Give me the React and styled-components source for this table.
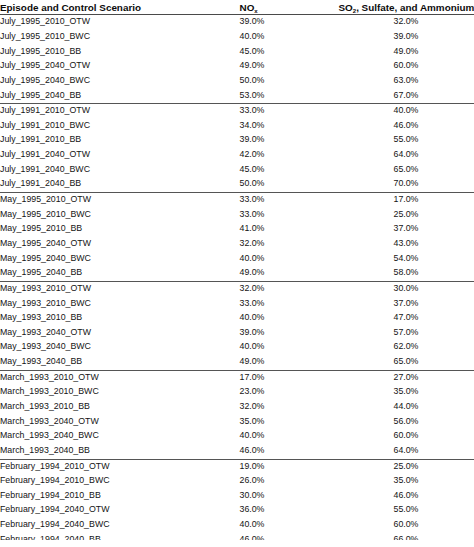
import React from 'react';
import styled, { createGlobalStyle } from 'styled-components';

const GlobalStyle = createGlobalStyle`
    html, body {
        margin: 0;
        padding: 0;
        background: #ffffff;
        overflow: hidden;
    }
    body {
        font-family: "Liberation Sans", Arial, sans-serif;
        color: #141414;
    }
`;

const StyledFrame = styled.div`
    width: 484px;
    height: 540px;
    overflow: hidden;
`;

const StyledHeader = styled.div`
    display: grid;
    grid-template-columns: 239.5px 99px 1fr;
    height: 13.75px;
    border-bottom: 1.5px solid #4a4a4a;
    font-size: 9.9px;
    font-weight: 700;
    line-height: 13px;
    padding-top: 0.6px;
    box-sizing: content-box;
    color: #0c0c0c;
    white-space: nowrap;
`;

const StyledGroup = styled.div`
    border-top: ${(p) => (p.$first ? 'none' : '1.5px solid #555')};
`;

const StyledRow = styled.div`
    display: grid;
    grid-template-columns: 239.5px 99px 1fr;
    height: 14.65px;
    font-size: 8.8px;
    line-height: 13px;
    white-space: nowrap;
`;

const StyledCell = styled.div`
    padding-left: ${(p) => p.$indent || 0}px;
`;

const Sub = styled.sub`
    font-size: 6px;
    vertical-align: -1.5px;
    line-height: 0;
`;

const suffixes = ['2010_OTW', '2010_BWC', '2010_BB', '2040_OTW', '2040_BWC', '2040_BB'];

const groups = [
    { episode: 'July_1995', values: [[39, 32], [40, 39], [45, 49], [49, 60], [50, 63], [53, 67]] },
    { episode: 'July_1991', values: [[33, 40], [34, 46], [39, 55], [42, 64], [45, 65], [50, 70]] },
    { episode: 'May_1995', values: [[33, 17], [33, 25], [41, 37], [32, 43], [40, 54], [49, 58]] },
    { episode: 'May_1993', values: [[32, 30], [33, 37], [40, 47], [39, 57], [40, 62], [49, 65]] },
    { episode: 'March_1993', values: [[17, 27], [23, 35], [32, 44], [35, 56], [40, 60], [46, 64]] },
    { episode: 'February_1994', values: [[19, 25], [26, 35], [30, 46], [36, 55], [40, 60], [46, 66]] },
];

const pct = (n) => `${n.toFixed(1)}%`;

const App = () => {
    return (
        <StyledFrame>
            <GlobalStyle />
            <StyledHeader>
                <StyledCell>Episode and Control Scenario</StyledCell>
                <StyledCell>
                    NO<Sub>x</Sub>
                </StyledCell>
                <StyledCell>
                    SO<Sub>2</Sub>, Sulfate, and Ammonium
                </StyledCell>
            </StyledHeader>
            {groups.map((g, gi) => (
                <StyledGroup key={g.episode} $first={gi === 0}>
                    {g.values.map(([nox, so2], i) => (
                        <StyledRow key={suffixes[i]}>
                            <StyledCell>{`${g.episode}_${suffixes[i]}`}</StyledCell>
                            <StyledCell>{pct(nox)}</StyledCell>
                            <StyledCell $indent={55}>{pct(so2)}</StyledCell>
                        </StyledRow>
                    ))}
                </StyledGroup>
            ))}
        </StyledFrame>
    );
};

export default App;
